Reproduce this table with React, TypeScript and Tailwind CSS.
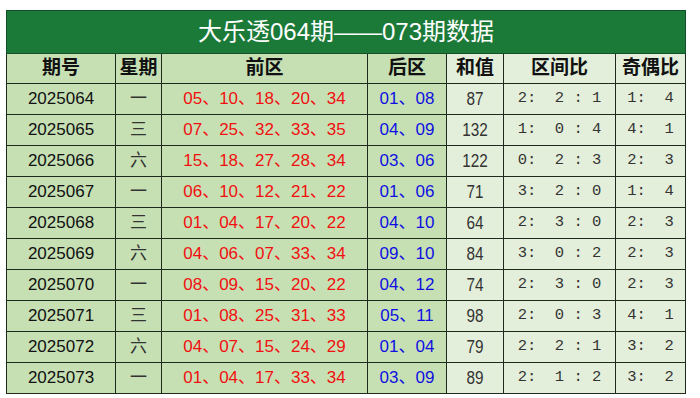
const rows = [
  { id: '2025064', day: '一', front: '05、10、18、20、34', back: '01、08', sum: '87', zone: '2:  2 : 1', odd: '1:  4' },
  { id: '2025065', day: '三', front: '07、25、32、33、35', back: '04、09', sum: '132', zone: '1:  0 : 4', odd: '4:  1' },
  { id: '2025066', day: '六', front: '15、18、27、28、34', back: '03、06', sum: '122', zone: '0:  2 : 3', odd: '2:  3' },
  { id: '2025067', day: '一', front: '06、10、12、21、22', back: '01、06', sum: '71', zone: '3:  2 : 0', odd: '1:  4' },
  { id: '2025068', day: '三', front: '01、04、17、20、22', back: '04、10', sum: '64', zone: '2:  3 : 0', odd: '2:  3' },
  { id: '2025069', day: '六', front: '04、06、07、33、34', back: '09、10', sum: '84', zone: '3:  0 : 2', odd: '2:  3' },
  { id: '2025070', day: '一', front: '08、09、15、20、22', back: '04、12', sum: '74', zone: '2:  3 : 0', odd: '2:  3' },
  { id: '2025071', day: '三', front: '01、08、25、31、33', back: '05、11', sum: '98', zone: '2:  0 : 3', odd: '4:  1' },
  { id: '2025072', day: '六', front: '04、07、15、24、29', back: '01、04', sum: '79', zone: '2:  2 : 1', odd: '3:  2' },
  { id: '2025073', day: '一', front: '01、04、17、33、34', back: '03、09', sum: '89', zone: '2:  1 : 2', odd: '3:  2' },
];

const cjk = { fontFamily: '"Liberation Sans", "Noto Sans CJK SC", sans-serif' };
const mono = { fontFamily: '"Liberation Mono", "Noto Sans CJK SC", monospace' };

const dark = 'bg-[#c6e0b4]';
const light = 'bg-[#e3efda]';
const cell = 'border border-[#1f2a1f] text-center p-0';

export default function App() {
  return (
    <div className="w-[700px] h-[398px] bg-white pt-[10px] pl-[6px]" style={cjk}>
      <table className="table-fixed border-collapse w-[679px]">
        <colgroup>
          <col className="w-[109px]" />
          <col className="w-[46px]" />
          <col className="w-[206px]" />
          <col className="w-[79px]" />
          <col className="w-[57px]" />
          <col className="w-[112px]" />
          <col className="w-[70px]" />
        </colgroup>
        <thead>
          <tr className="h-[43px]">
            <th colSpan={7} className="border border-[#14502a] bg-[#1b7a38] text-white text-[24px] font-normal text-center leading-none">
              大乐透064期——073期数据
            </th>
          </tr>
          <tr className="h-[30px] text-[19px] font-bold text-[#111]">
            <th className={`${cell} ${dark}`}>期号</th>
            <th className={`${cell} ${dark}`}>星期</th>
            <th className={`${cell} ${dark}`}>前区</th>
            <th className={`${cell} ${dark}`}>后区</th>
            <th className={`${cell} ${light}`}>和值</th>
            <th className={`${cell} ${light}`}>区间比</th>
            <th className={`${cell} ${light}`}>奇偶比</th>
          </tr>
        </thead>
        <tbody>
          {rows.map((r) => (
            <tr key={r.id} className="h-[31px]">
              <td className={`${cell} ${dark} text-[17px] text-[#111]`}>{r.id}</td>
              <td className={`${cell} ${dark} text-[17px] text-[#333]`}>{r.day}</td>
              <td className={`${cell} ${dark} text-[17px] text-[#f01010]`}>{r.front}</td>
              <td className={`${cell} ${dark} text-[17px] text-[#1010e0]`}>{r.back}</td>
              <td className={`${cell} ${light} text-[18px] text-[#333]`}>
                <span className="inline-block scale-x-[0.85]">{r.sum}</span>
              </td>
              <td className={`${cell} ${light} text-[15.5px] text-[#333] whitespace-pre`} style={mono}>{r.zone}</td>
              <td className={`${cell} ${light} text-[15.5px] text-[#333] whitespace-pre`} style={mono}>{r.odd}</td>
            </tr>
          ))}
        </tbody>
      </table>
    </div>
  );
}
